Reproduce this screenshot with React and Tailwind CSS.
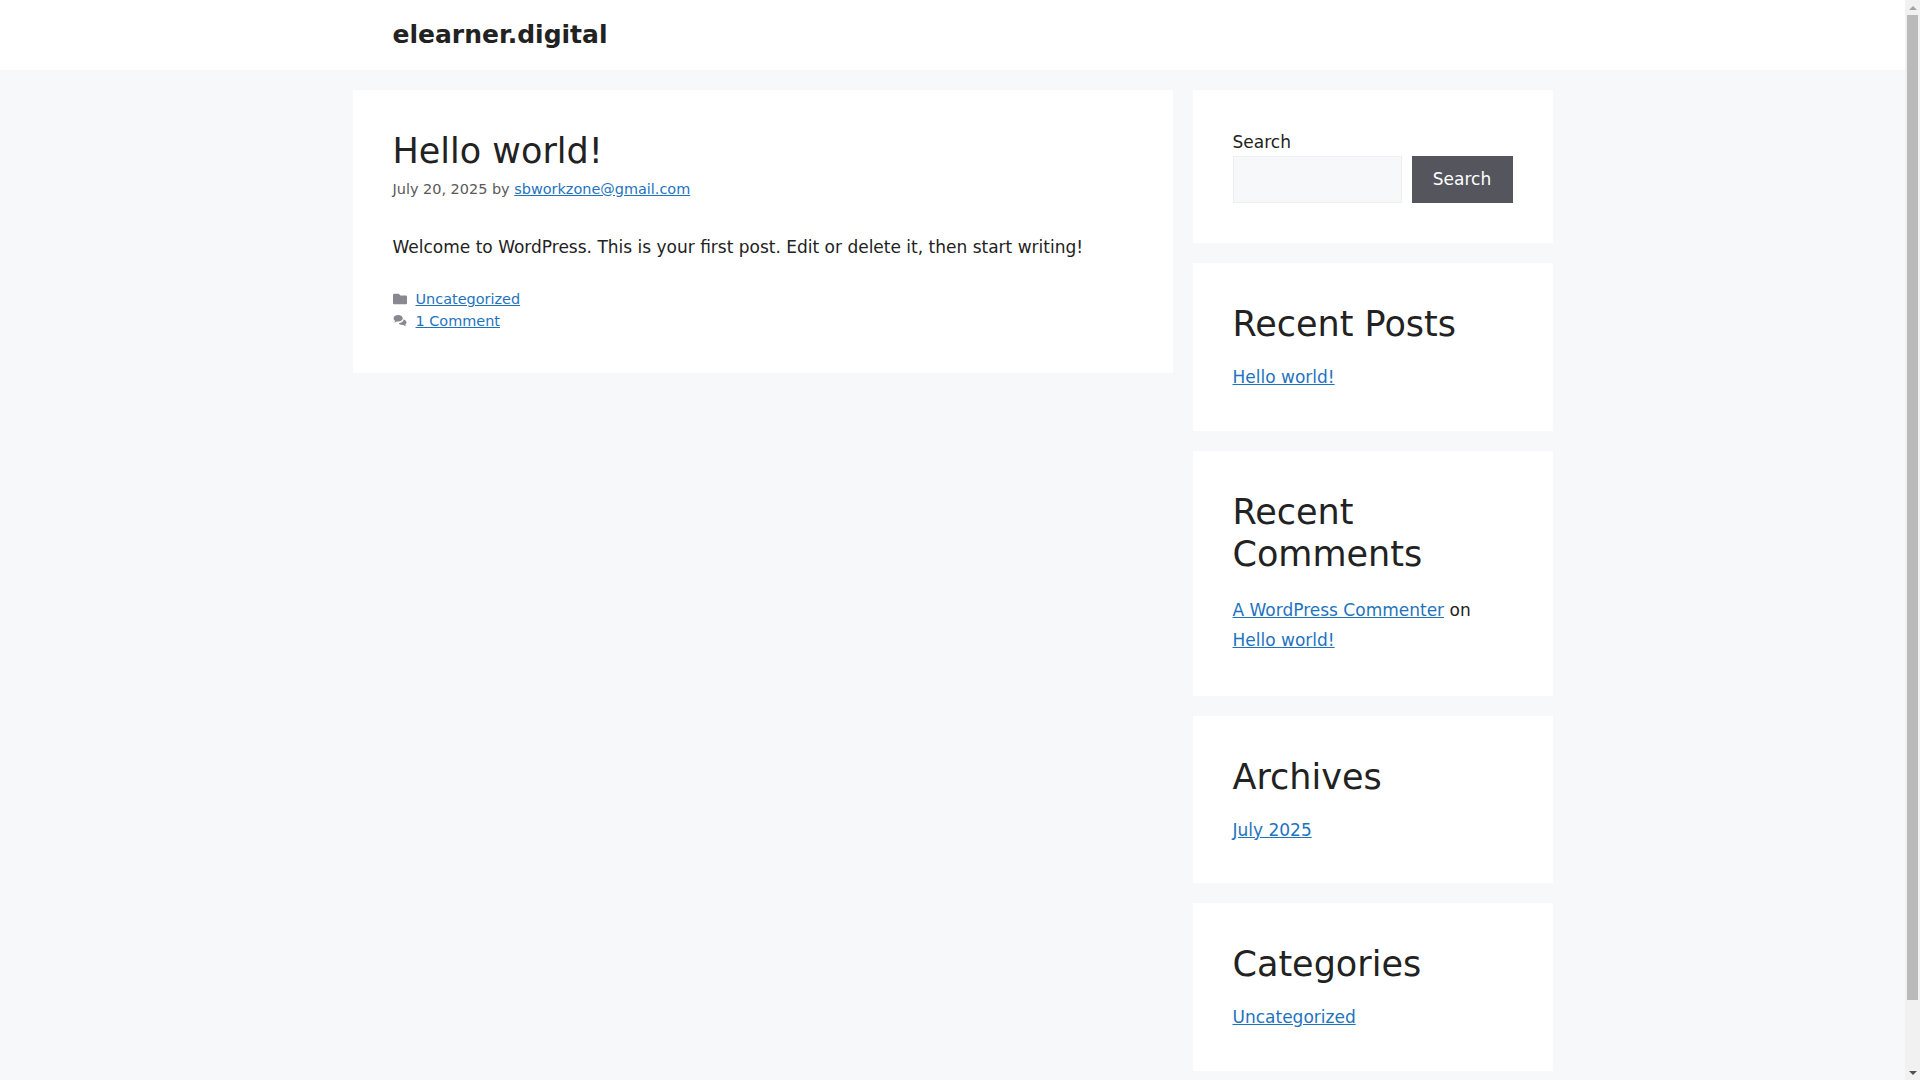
import React from 'react';
import { FaFolder } from 'react-icons/fa';

const Link = ({ children }) => (
  <a href="#" className="text-[#1e73be] underline">{children}</a>
);

const Widget = ({ title, children }) => (
  <aside className="bg-white px-10 pt-10 pb-[40.5px]">
    <h2 className="text-[35px] leading-[42px] text-[#222222] mb-[19px]">{title}</h2>
    <div className="leading-[26px]">{children}</div>
  </aside>
);

// speech bubbles used next to the comment count
const CommentsIcon = () => (
  <svg viewBox="0 0 14 14" className="w-[14px] h-[14px] text-[#888891]" fill="currentColor">
    <path d="M5.2 1C2.6 1 .6 2.4.6 4.3c0 1 .6 1.9 1.5 2.5L1.4 8.6l2.3-1.2c.5.1 1 .2 1.5.2 2.6 0 4.6-1.5 4.6-3.3S7.800 1 5.200 1z" />
    <path d="M10.600 5.200c.1 2.300-2.300 3.900-5 3.900.6 1.200 2 2 3.700 2 .4 0 .8 0 1.200-.2l2.300 1.500-.5-2c.7-.5 1.200-1.300 1.200-2.100 0-1.200-1-2.300-2.900-3.100z" />
  </svg>
);

const App = () => {
  return (
    <div className="h-screen flex overflow-hidden text-[#222222] text-[17px] leading-[28.9px] font-['DejaVu_Sans',sans-serif]">
      <div className="flex-1 min-w-0 bg-[#f7f8f9]">
        {/* Header */}
        <header className="bg-white h-[70px]">
          <div className="w-[1200px] mx-auto px-10 h-full flex items-center">
            <a href="#" className="text-[25px] font-bold leading-[30px] text-[#222222]">elearner.digital</a>
          </div>
        </header>

        {/* Content */}
        <div className="w-[1200px] mx-auto flex items-start gap-5 mt-5">
          <main className="w-[820px] bg-white px-10 pt-10 pb-[41px]">
            <h1 className="text-[35px] leading-[42px] text-[#222222]">Hello world!</h1>
            <p className="text-[14.45px] leading-[24px] text-[#595959] mt-[5px]">
              July 20, 2025 by <Link>sbworkzone@gmail.com</Link>
            </p>
            <p className="mt-[32px]">
              Welcome to WordPress. This is your first post. Edit or delete it, then start writing!
            </p>
            <div className="mt-[26px] text-[14.45px] leading-[22px] text-[#595959]">
              <div className="flex items-center gap-[9px]">
                <FaFolder className="w-[14px] h-[14px] text-[#888891]" />
                <Link>Uncategorized</Link>
              </div>
              <div className="flex items-center gap-[9px]">
                <CommentsIcon />
                <Link>1 Comment</Link>
              </div>
            </div>
          </main>

          <div className="w-[360px] flex flex-col gap-5">
            <aside className="bg-white p-10">
              <label className="block leading-[24px] mb-[2px]">Search</label>
              <div className="flex gap-[10px]">
                <input type="text" className="w-[169px] h-[47px] bg-[#f7f8f9] border border-[#eeeeee]" />
                <button className="w-[101px] h-[47px] bg-[#55555e] text-white text-[17px]">Search</button>
              </div>
            </aside>

            <Widget title="Recent Posts">
              <Link>Hello world!</Link>
            </Widget>

            <Widget title="Recent Comments">
              <p className="pt-[1.5px] leading-[30px]"><Link>A WordPress Commenter</Link> on <Link>Hello world!</Link></p>
            </Widget>

            <Widget title="Archives">
              <Link>July 2025</Link>
            </Widget>

            <Widget title="Categories">
              <Link>Uncategorized</Link>
            </Widget>
          </div>
        </div>
      </div>

      {/* Scrollbar */}
      <div className="w-[15px] shrink-0 bg-[#f1f1f1] flex flex-col items-center">
        <div className="h-[15px] flex items-center justify-center">
          <div className="w-0 h-0 border-x-[4px] border-x-transparent border-b-[4px] border-b-[#a3a3a3]" />
        </div>
        <div className="w-[11px] h-[985px] bg-[#bababa]" />
        <div className="flex-1" />
        <div className="h-[15px] flex items-center justify-center">
          <div className="w-0 h-0 border-x-[4px] border-x-transparent border-t-[4px] border-t-[#505050]" />
        </div>
      </div>
    </div>
  );
};

export default App;
